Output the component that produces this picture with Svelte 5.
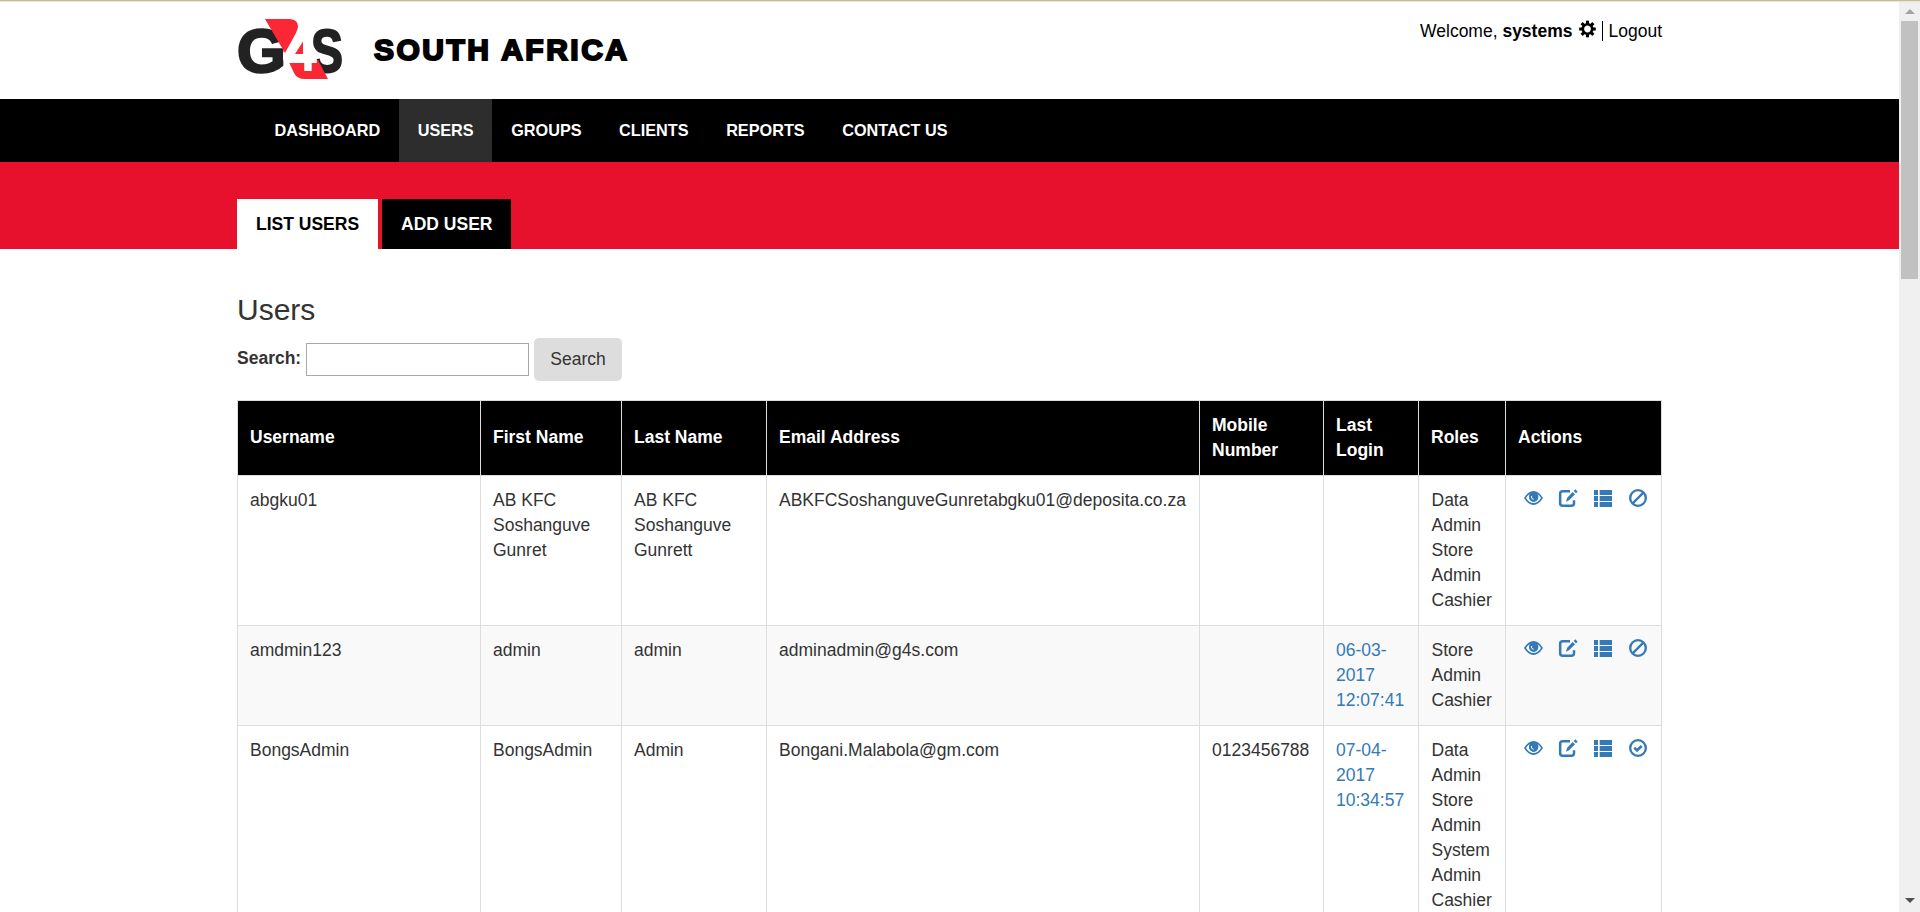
<script>
  const nav = ['DASHBOARD', 'USERS', 'GROUPS', 'CLIENTS', 'REPORTS', 'CONTACT US'];
  const columns = [
    ['Username', 243], ['First Name', 141], ['Last Name', 145], ['Email Address', 433],
    ['Mobile Number', 124, true], ['Last Login', 95, true], ['Roles', 87], ['Actions', 156]
  ];
  const users = [
    {
      username: 'abgku01', first: 'AB KFC Soshanguve Gunret', last: 'AB KFC Soshanguve Gunrett',
      email: 'ABKFCSoshanguveGunretabgku01@deposita.co.za', mobile: '', login: [],
      roles: ['Data Admin', 'Store Admin', 'Cashier'], enabled: true
    },
    {
      username: 'amdmin123', first: 'admin', last: 'admin', email: 'adminadmin@g4s.com', mobile: '',
      login: ['06-03-', '2017', '12:07:41'], roles: ['Store Admin', 'Cashier'], enabled: true
    },
    {
      username: 'BongsAdmin', first: 'BongsAdmin', last: 'Admin', email: 'Bongani.Malabola@gm.com',
      mobile: '0123456788', login: ['07-04-', '2017', '10:34:57'],
      roles: ['Data Admin', 'Store Admin', 'System Admin', 'Cashier'], enabled: false
    }
  ];
  const teeth = [0, 45, 90, 135, 180, 225, 270, 315];
</script>

<div class="screen">
  <div class="page">
    <header>
      <div class="wrap head">
        <svg class="logo" width="400" height="84" viewBox="0 0 400 84" role="img" aria-label="G4S South Africa">
          <g class="mark">
            <text x="0" y="60.500" font-size="61" textLength="49" lengthAdjust="spacingAndGlyphs" fill="#222" stroke="#222" stroke-width="2.400">G</text>
            <text x="74" y="60.500" font-size="61" textLength="32" lengthAdjust="spacingAndGlyphs" fill="#222" stroke="#222" stroke-width="2">S</text>
            <path d="M58 24L63 20H75V62H62L46 49V42Z" fill="#fff" />
            <path d="M28 8H53Q61 9 61 15Q61 18 59 22L48 42Z" fill="#fb2735" />
            <path d="M51 49H81L91 68H68Q60 68 57 62Z" fill="#fb2735" />
            <path d="M55 43L66 29V43Z" fill="#fb2735" />
            <text x="49" y="60" font-size="58" textLength="31" lengthAdjust="spacingAndGlyphs" fill="#fff">4</text>
          </g>
          <text class="country" x="137" y="49" font-size="30" textLength="253">SOUTH AFRICA</text>
        </svg>
        <div class="account">
          <span>Welcome, <b>systems</b></span>
          <svg class="gear" width="17" height="18" viewBox="-9 -9 18 18">
            <circle r="5" fill="none" stroke="#000" stroke-width="2.800" />
            {#each teeth as angle}
              <rect x="-1.6" y="-8.8" width="3.2" height="3.8" transform="rotate({angle})" />
            {/each}
          </svg>
          <span class="logout">Logout</span>
        </div>
      </div>
    </header>
    <nav>
      {#each nav as item}
        <span class:active={item === 'USERS'}>{item}</span>
      {/each}
    </nav>
    <div class="band">
      <span class="tab current">LIST USERS</span>
      <span class="tab">ADD USER</span>
    </div>
    <main>
      <h1>Users</h1>
      <div class="search">
        <label for="q">Search:</label>
        <input id="q" type="text" />
        <button>Search</button>
      </div>
      <table>
        <colgroup>
          {#each columns as column}<col style="width: {column[1]}px" />{/each}
        </colgroup>
        <thead>
          <tr>{#each columns as column}<th class:double={column[2]}>{column[0]}</th>{/each}</tr>
        </thead>
        <tbody>
          {#each users as user}
            <tr>
              <td>{user.username}</td>
              <td>{user.first}</td>
              <td>{user.last}</td>
              <td>{user.email}</td>
              <td>{user.mobile}</td>
              <td class="login">{#each user.login as part}<div>{part}</div>{/each}</td>
              <td>{#each user.roles as role}<div>{role}</div>{/each}</td>
              <td>
                <div class="actions">
                  <svg viewBox="0 0 60 60">
                    <path fill-rule="evenodd" d="M3 30Q16 9 31.500 9T60 30Q47 51 31.500 51T3 30ZM9 30Q18 45 31.500 45T54 30Q50 22 43 18Q47 23 46 29Q43 41 31.500 41Q19 40 18 28Q18 22 21 17Q13 22 9 30Z" />
                    <path d="M21 17Q31 9 42 17Q47 23 45 30Q40 42 30 41Q20 38 18 28Q18 22 21 17Z" />
                    <path d="M25 24Q24 33 32 34" fill="none" stroke="#fff" stroke-width="3" />
                  </svg>
                  <svg viewBox="0 0 60 60">
                    <path d="M36 9.500H14Q6.500 9.500 6.500 17V46Q6.500 53.500 14 53.500H40Q48 53.500 48 46V37" fill="none" stroke="#337ab7" stroke-width="7.500" />
                    <path d="M24 41L27 30L44 12L51 19L33 37ZM47 9L52 4L59 11L54 16Z" />
                  </svg>
                  <svg viewBox="0 0 60 60">
                    <path d="M3 6H15V21H3ZM20 6H57V21H20ZM3 24H15V39H3ZM20 24H57V39H20ZM3 42H15V57H3ZM20 42H57V57H20Z" />
                  </svg>
                  <svg viewBox="0 0 60 60">
                    <circle cx="30" cy="30" r="23.500" fill="none" stroke="#337ab7" stroke-width="7" />
                    {#if user.enabled}
                      <path d="M14 46L46 14" stroke="#337ab7" stroke-width="7" />
                    {:else}
                      <path d="M19 29L27 37L41 24" fill="none" stroke="#337ab7" stroke-width="8" />
                    {/if}
                  </svg>
                </div>
              </td>
            </tr>
          {/each}
        </tbody>
      </table>
    </main>
  </div>
  <div class="scrollbar">
    <i class="up"></i>
    <div class="thumb"></div>
    <i class="down"></i>
  </div>
</div>

<style>
  :global(body) { margin: 0; overflow: hidden; background: #fff; }
  .screen {
    position: relative;
    display: flex;
    height: 912px;
    overflow: hidden;
    font: 17.5px/25px "Liberation Sans", Arial, sans-serif;
    color: #333;
  }
  .screen::before {
    content: "";
    position: absolute;
    inset: 0 0 auto;
    height: 1px;
    background: #cdbb8a;
    box-shadow: 0 1px 1px #e2e2e2;
  }
  .page { width: 1899px; height: 912px; overflow: hidden; }
  header { height: 99px; box-sizing: border-box; padding-top: 11px; }
  .wrap { width: 1425px; margin-left: 237px; }
  .head { display: flex; justify-content: space-between; color: #000; }
  .logo { display: block; }
  .logo text { font-family: "Liberation Sans", Arial, sans-serif; font-weight: bold; }
  .country { fill: #000; stroke: #000; stroke-width: 2; }
  .account { display: flex; align-items: center; height: 20px; margin-top: 10px; }
  .gear { margin: -4px 6px 0 7px; }
  .logout { border-left: 1px solid #000; padding-left: 5px; line-height: 20px; }
  nav {
    display: flex;
    height: 63px;
    padding-left: 255.800px;
    background: #000;
    color: #fff;
    font: bold 16.250px/63px "Liberation Sans", Arial, sans-serif;
  }
  nav span { padding: 0 18.750px; }
  nav .active { background: #2d2d2d; }
  .band {
    display: flex;
    align-items: flex-end;
    gap: 4px;
    height: 87px;
    padding-left: 237px;
    background: #e8112d;
  }
  .tab { padding: 0 19px; background: #000; color: #fff; font-weight: bold; line-height: 50px; }
  .tab.current { background: #fff; color: #000; }
  main { width: 1425px; margin-left: 237px; padding-top: 44px; }
  h1 { margin: 0; font-size: 30px; font-weight: normal; line-height: 33px; }
  .search { display: flex; align-items: center; height: 43px; margin: 12px 0 19px; }
  label { width: 69px; font-weight: bold; margin-top: -3px; }
  input {
    width: 223px;
    height: 33px;
    box-sizing: border-box;
    margin: 0 5px 0 0;
    padding: 0 4px;
    border: 1px solid #a9a9a9;
    font: inherit;
  }
  button {
    width: 88px;
    height: 43px;
    padding: 0;
    border: 0;
    border-radius: 5px;
    background: #ddd;
    color: #333;
    font: inherit;
  }
  table {
    width: 1425px;
    table-layout: fixed;
    border-collapse: separate;
    border-spacing: 0;
    border-right: 1px solid #ddd;
  }
  th, td {
    padding: 12px 0 12px 12px;
    border: solid #ddd;
    border-width: 1px 0 0 1px;
    text-align: left;
    vertical-align: top;
  }
  th { height: 50px; background: #000; color: #fff; vertical-align: middle; padding: 11px 12px 13px; }
  th.double { padding: 12px; }
  td:nth-child(7) { padding: 12px 9px 12px 12.500px; }
  tbody tr:nth-child(even) { background: #f9f9f9; }
  .login { color: #337ab7; }
  .actions { display: flex; gap: 15px; padding-left: 5px; }
  .actions svg { width: 20px; height: 20px; fill: #337ab7; }
  .scrollbar {
    display: flex;
    flex-direction: column;
    align-items: center;
    width: 21px;
    box-sizing: border-box;
    padding: 9px 2px 9px;
    background: #f0f0f0;
  }
  .up { border: solid transparent; border-width: 0 5px 5px; border-bottom-color: #a3a3a3; }
  .thumb { width: 17px; height: 258px; margin-top: 7px; background: #c1c1c1; }
  .down { margin-top: auto; border: solid transparent; border-width: 5px 5px 0; border-top-color: #505050; }
</style>
